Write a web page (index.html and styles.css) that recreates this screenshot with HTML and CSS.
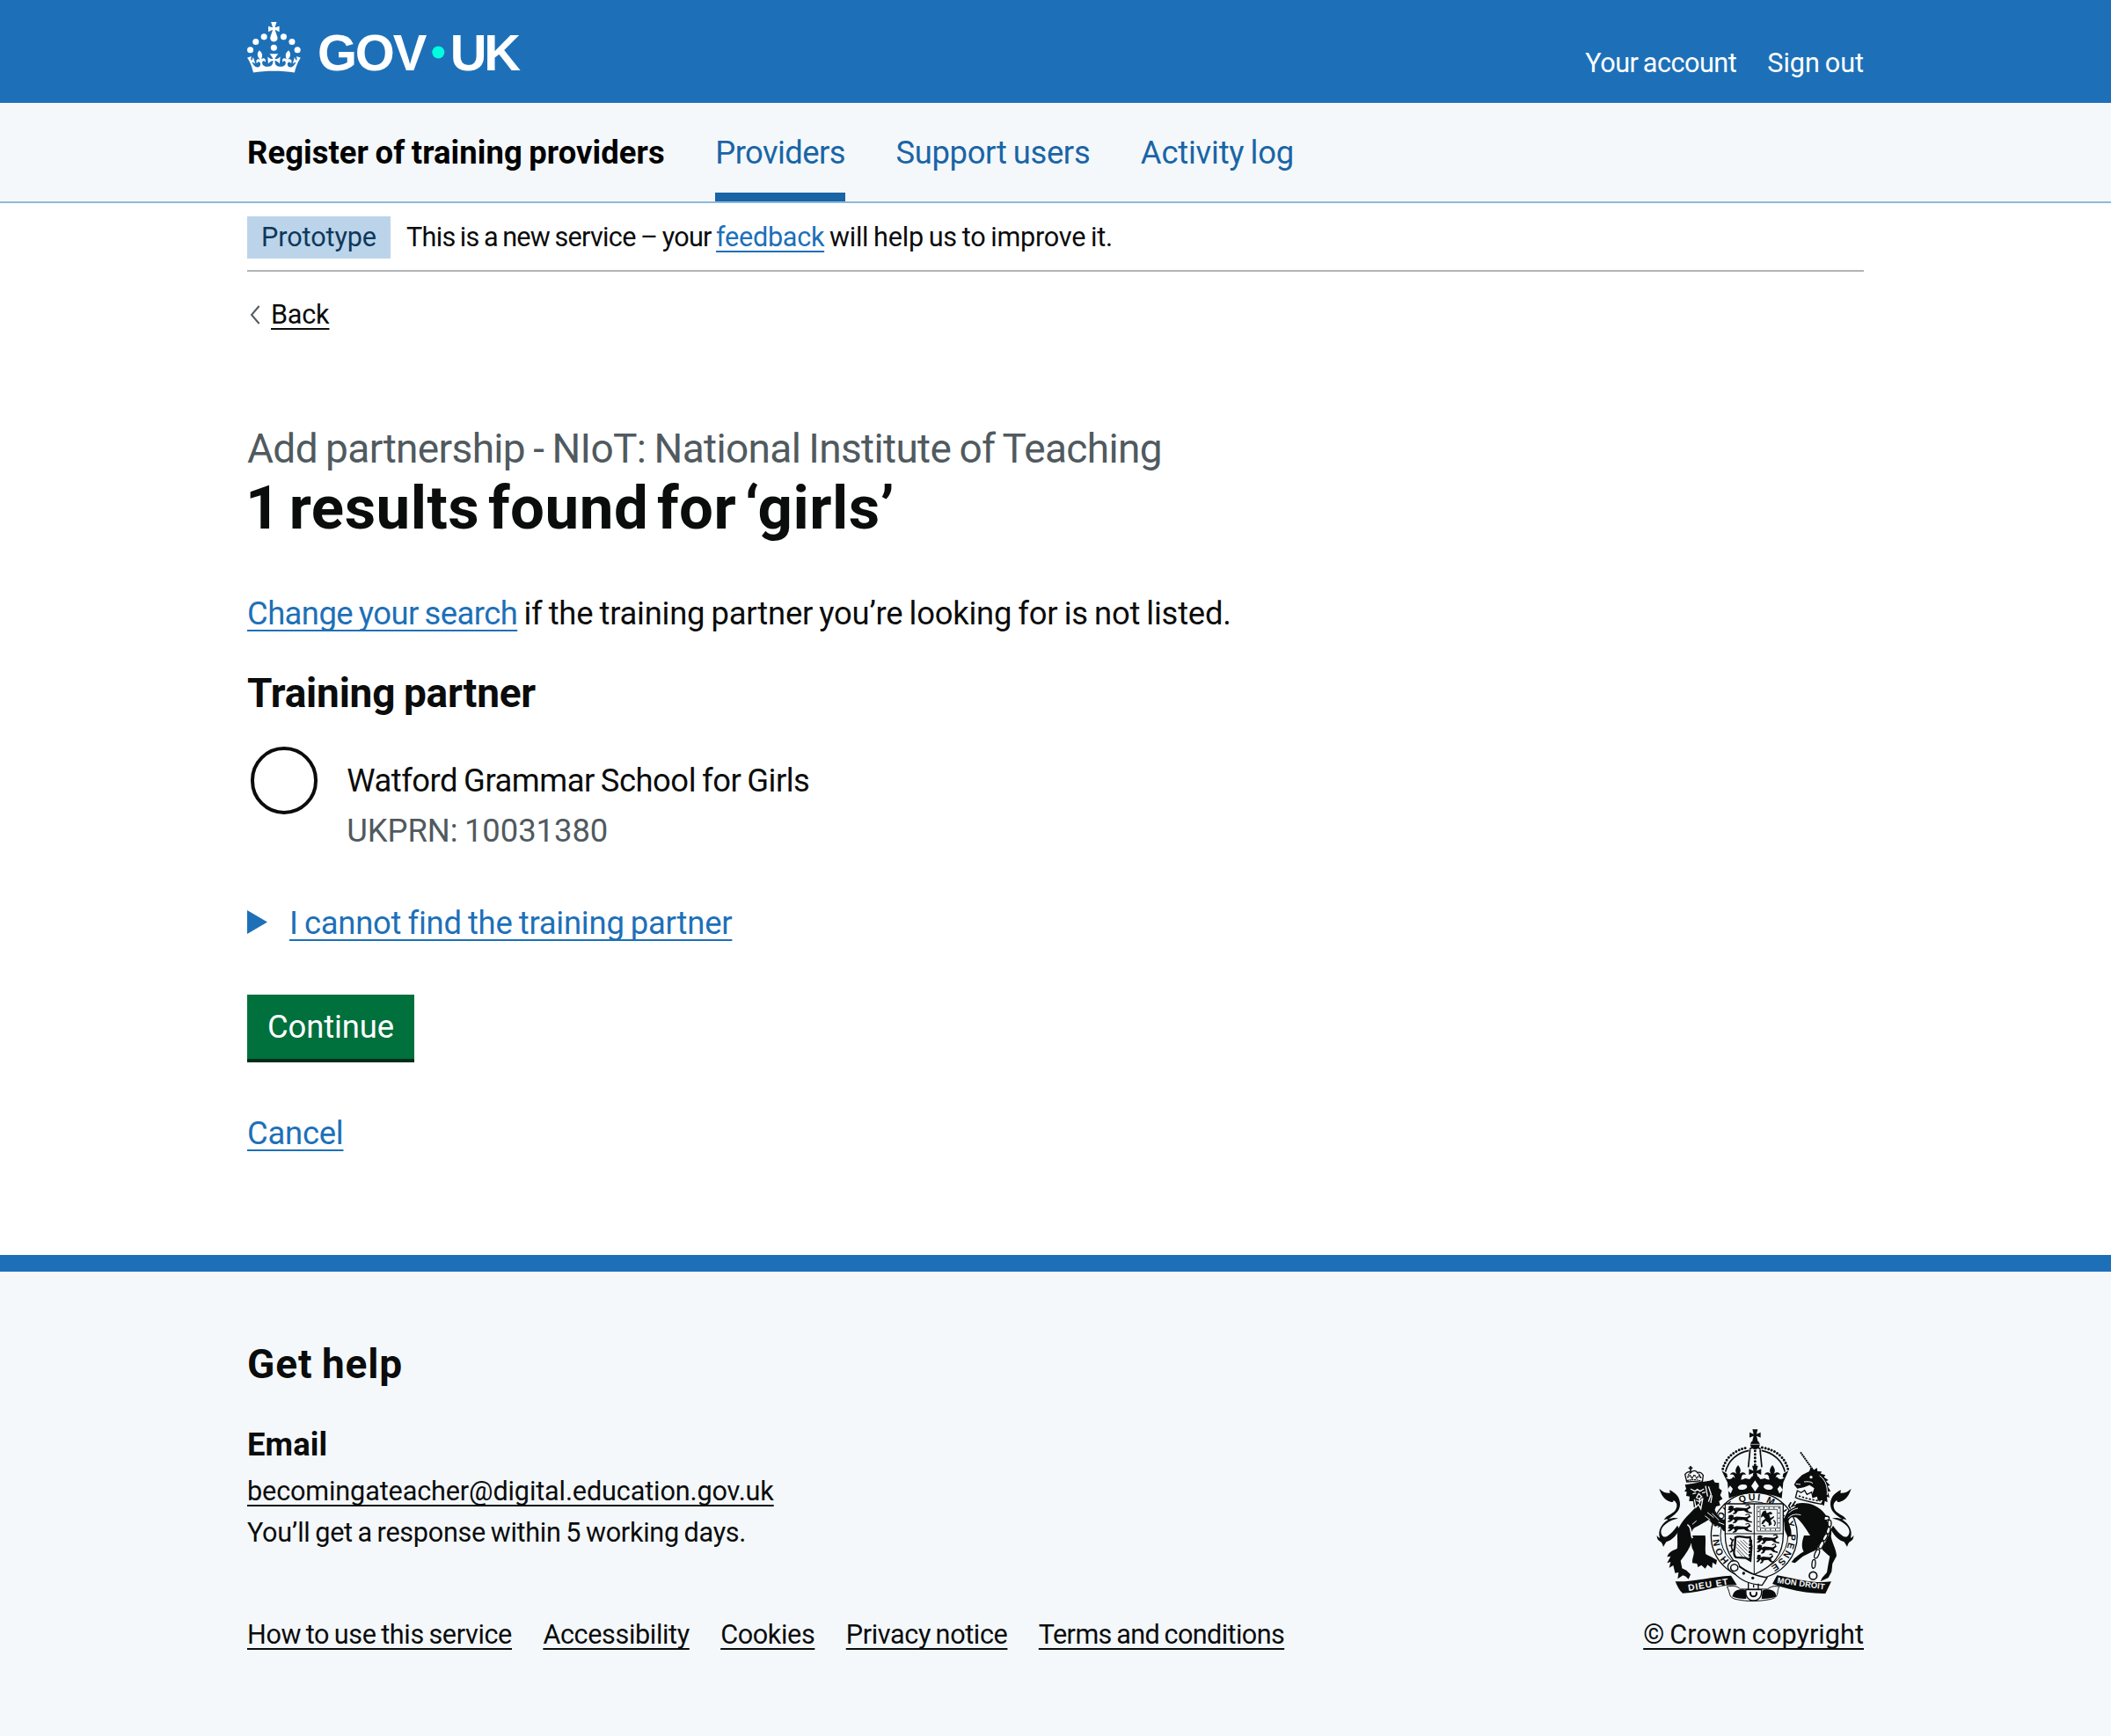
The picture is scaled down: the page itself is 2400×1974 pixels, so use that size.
FILE: index.html
```html
<!DOCTYPE html>
<html lang="en">
<head>
<meta charset="utf-8">
<title>1 results found for ‘girls’ - Register of training providers</title>
<link rel="stylesheet" href="styles.css">
</head>
<body>
<header class="header">
  <div class="container header-row">
    <svg class="logo" viewBox="0 0 324 60" role="img" aria-label="GOV.UK">
      <g fill="#fff">
        <circle cx="20" cy="17.6" r="3.7"/><circle cx="10.2" cy="23.5" r="3.7"/><circle cx="3.7" cy="33.2" r="3.7"/>
        <circle cx="31.7" cy="30.6" r="3.7"/><circle cx="43.3" cy="17.6" r="3.7"/><circle cx="53.2" cy="23.5" r="3.7"/><circle cx="59.7" cy="33.2" r="3.7"/>
        <path d="M33.1,9.8c.2-.1.3-.3.5-.5l4.6,2.4v-6.8l-4.6,1.5c-.1-.2-.3-.3-.5-.5l1.9-5.9h-6.7l1.9,5.9c-.2.1-.3.3-.5.5l-4.6-1.5v6.8l4.6-2.4c.1.2.3.3.5.5l-2.6,8c-.9,2.8,1.2,5.7,4.1,5.7h0c3,0,5.1-2.9,4.1-5.7l-2.6-8ZM37,37.9s-3.4,3.8-4.1,6.1c2.2,0,4.2-.5,6.4-2.8l-.7,8.5c-2-2.8-4.4-4.1-5.7-3.8.1,3.1.5,6.7,5.8,7.2,3.7.3,6.7-1.5,7-3.8.4-2.6-2-4.3-3.7-1.6-1.4-4.5,2.4-6.1,4.9-3.2-1.9-4.5-1.8-7.7,2.4-10.9,3,4,2.6,7.3-1.2,11.1,2.4-1.3,6.2,0,4,4.6-1.2-2.8-3.7-2.2-4.2.2-.3,1.7.7,3.7,3,4.2,1.9.3,4.7-.9,7-5.9-1.3,0-2.4.7-3.9,1.7l2.4-8c.6,2.3,1.4,3.7,2.2,4.5.6-1.6.5-2.8,0-5.3l5,1.8c-2.6,3.6-5.2,8.7-7.3,17.5-7.4-1.1-15.7-1.7-24.5-1.7h0c-8.8,0-17.1.6-24.5,1.7-2.1-8.9-4.7-13.9-7.3-17.5l5-1.8c-.5,2.5-.6,3.7,0,5.3.8-.8,1.6-2.3,2.2-4.5l2.4,8c-1.5-1-2.6-1.7-3.9-1.7,2.3,5,5.2,6.2,7,5.9,2.3-.4,3.3-2.4,3-4.2-.5-2.4-3-3.1-4.2-.2-2.2-4.6,1.6-6,4-4.6-3.7-3.7-4.2-7.1-1.2-11.1,4.2,3.2,4.3,6.4,2.4,10.9,2.5-2.8,6.3-1.3,4.9,3.2-1.8-2.7-4.1-1-3.7,1.6.3,2.3,3.3,4.1,7,3.8,5.4-.5,5.7-4.2,5.8-7.2-1.3-.2-3.7,1-5.7,3.8l-.7-8.5c2.2,2.3,4.2,2.7,6.4,2.8-.7-2.3-4.1-6.1-4.1-6.1h10.6Z"/>
        <text class="wordmark" x="83.5" y="57" textLength="130">GOV</text>
        <text class="wordmark" x="241" y="57" textLength="84">UK</text>
      </g>
      <circle cx="227" cy="36" r="7.3" fill="#00ffe0"/>
    </svg>
    <nav class="account">
      <a class="account-link" href="#">Your account</a>
      <a class="account-link-wide" href="#">Sign out</a>
    </nav>
  </div>
</header>

<section class="service-nav">
  <div class="container service-nav-row">
    <a class="service-name" href="#">Register of training providers</a>
    <a class="nav-item nav-item-active" href="#">Providers</a>
    <a class="nav-item nav-item-users" href="#">Support users</a>
    <a class="nav-item nav-item-log" href="#">Activity log</a>
  </div>
</section>

<div class="container">
  <div class="phase-banner">
    <strong class="tag">Prototype</strong>
    <p class="phase-text"><span class="ls-7">This is a new service – your </span><a class="link ls-3" href="#">feedback</a><span class="ls-2"> will help us to improve it.</span></p>
  </div>

  <a class="back-link" href="#">
    <svg class="chevron" viewBox="0 0 12 22"><path d="M10.6 1 2 11l8.6 10" fill="none" stroke="#505a5f" stroke-width="2"/></svg>
    <span class="back-text">Back</span>
  </a>

  <main class="main">
    <span class="caption">Add partnership - NIoT: National Institute of Teaching</span>
    <h1 class="heading-l">1 results found for ‘girls’</h1>
    <p class="body search-hint"><a class="link ls-5" href="#">Change your search</a><span class="ls-2"> if the training partner you’re looking for is not listed.</span></p>
    <h2 class="heading-m">Training partner</h2>
    <label class="radio">
      <span class="radio-circle"></span>
      <span class="radio-text">
        <span class="radio-label">Watford Grammar School for Girls</span>
        <span class="radio-hint">UKPRN: 10031380</span>
      </span>
    </label>
    <div class="details">
      <svg class="triangle" viewBox="0 0 23 27"><path d="M0 0 23 13.500 0 27z" fill="#1d70b8"/></svg>
      <a class="link ls-2" href="#">I cannot find the training partner</a>
    </div>
    <button class="button" type="button">Continue</button>
    <p class="body cancel"><a class="link ls-2" href="#">Cancel</a></p>
  </main>
</div>

<footer class="footer">
  <div class="container footer-row">
    <div class="footer-main">
      <h2 class="heading-help">Get help</h2>
      <h3 class="heading-s">Email</h3>
      <div class="contact">
        <a class="dark-link ls-1" href="#">becomingateacher@digital.education.gov.uk</a>
        <p class="ls-3">You’ll get a response within 5 working days.</p>
      </div>
      <nav class="footer-links">
        <a class="dark-link ls-4" href="#">How to use this service</a>
        <a class="dark-link ls-4" href="#">Accessibility</a>
        <a class="dark-link ls-4" href="#">Cookies</a>
        <a class="dark-link ls-4" href="#">Privacy notice</a>
        <a class="dark-link ls-6" href="#">Terms and conditions</a>
      </nav>
    </div>
    <div class="copyright">
      <svg class="crest" viewBox="25 30 752 610" aria-hidden="true">
        <defs>
          <g id="passant">
            <path d="M2 3l8-3 8 3-2 6 10-3 28 2 12-5 2 3-10 7 4 6 9 2v4l-15-3-9-6-17 1-6 8-10 2 2-4 5-3-4-6-9 8-8 1 1-4 6-3-7-4 3-4z"/>
            <path d="M60 8c8-8 2-12-8-7" fill="none" stroke="#0b0c0c" stroke-width="3"/>
          </g>
          <path id="cross" d="M-5-3-9-19H9L5-3 19-9V9L5 3 9 19H-9L-5 3-19 9V-9z"/>
          <path id="fleur" d="M0-24c9 12 9 20 4 29 8-8 18-6 19 3-5-4-10-2-12 4l-3 14H-8l-3-14c-2-6-7-8-12-4 1-9 11-11 19-3-5-9-5-17 4-29z"/>
          <path id="tail" d="M80 245c12 12 24 16 37 15l-2-10c18 8 36 22 36 48 0 26-20 38-40 51 12-4 25-6 34-2-15 2-30 8-42 18-18 14-22 30-10 43 10 8 30-10 49-37l8 14c-16 26-30 38-46 42-4 6-6 10-10 17-3-9-4-14-10-18-8-4-13-12-12-22 3 5 6 8 10 9-8-26 6-47 28-62-2-2-9-2-15 2 10-17 28-20 38-31 10-14 10-29-4-37 0 4-4 7-7 6-14-3-32-12-42-46z"/>
          <path id="motto" d="M319 490A120 120 0 1 1 424 523"/>
        </defs>
        <g fill="#0b0c0c">
          <!-- supporters' tails -->
          <use href="#tail"/>
          <use href="#tail" transform="matrix(-1 0 0 1 815 0)"/>
          <!-- garter -->
          <circle cx="404" cy="405" r="147" fill="#f4f8fb" stroke="#0b0c0c" stroke-width="4"/>
          <circle cx="404" cy="405" r="115" fill="#f4f8fb" stroke="#0b0c0c" stroke-width="3"/>
          <text class="motto-ring"><textPath href="#motto" textLength="600">HONI SOIT QUI MAL Y PENSE</textPath></text>
          <!-- lion -->
          <path d="M207 305c-20 24-50 47-62 78-7 22 0 45-4 67-14 5-29 12-34 28l12-2-12 23 12-4-5 20 14-8 6 26 12-2-3 22 18-12 10 4 9 9 7-16-14-14-15-7-5-26c18-22 32-44 39-67-6-18-5-33 8-45 18-10 36-19 49-28l12 14 27 9 10 15 20 3-1-14-14-7 12-5-8-13-22-8-28-48z"/>
          <path d="M187 405h50c3 24-2 44 2 64l21 10 17 10-3 16-12-8-2 20-15-12-8 13-13-12-12 7-3-12-16-2c-2-18 10-30 3-44-10-16-3-32-9-50z"/>
          <path d="M176 368c18 10 8 31 18 46" fill="none" stroke="#f4f8fb" stroke-width="5"/>
          <path d="M168 232l4 14-6 8 8 2-2 14 12 2-2 16 14 0 2 20 14-2 4 16 12-4 14 8 12-12 14 8 6-16 14-4-4-14 12-8-8-12 6-16-10-8 0-18-14-2-6-10-12 4z"/>
          <path d="M187 246l15 8 8-6 9 6 14-8M194 263l12-3M226 260l12-3M215 262l-8 14 9 4 9-7zM206 284c8 8 16 6 20-5M200 282l5 27 9-10 8 15 7-37M218 280v16M248 238l9 26-9 26M260 268l-4 26M238 236l7 36" fill="none" stroke="#f4f8fb" stroke-width="4"/>
          <path d="M236 338l18 14M244 326l22 18M260 330l24 23M207 355l-14 12M282 360l20 8" fill="none" stroke="#f4f8fb" stroke-width="3"/>
          <path d="M174 222l-6-25c5-9 14-11 20-7 8-8 16-8 22 0 9-2 16 2 20 10l-3 24c-18-4-36-4-53-2z" fill="#f4f8fb" stroke="#0b0c0c" stroke-width="4"/>
          <path d="M187 168v22M180 175h14" fill="none" stroke="#0b0c0c" stroke-width="5"/>
          <path d="M176 208l10-8 6 10 8-12 8 12 8-10 8 10M175 218c16-5 34-4 50 2M188 190c-8 4-10 10-10 18M209 190c8 4 10 10 10 18" fill="none" stroke="#0b0c0c" stroke-width="4" stroke-dasharray="6 2"/>
          <!-- unicorn -->
          <path d="M562 121l48 68" fill="none" stroke="#0b0c0c" stroke-width="6" stroke-dasharray="6 2"/>
          <path d="M540 232l7-13 20-20 25-13 5-14 10 10 11-8 2 12 14 1-3 7 16 5-5 7 15 10-8 4 14 14-9 2 11 18-10 1 6 20-9-2 2 19-9-5-3 17-38-25-1-18 6-17-16-11-20 8-22 4z"/>
          <circle cx="598" cy="206" r="5" fill="#f4f8fb"/>
          <path d="M546 229l16 2M627 201c20 14 28 36 26 66M574 222c12-1 22-2 30 5" fill="none" stroke="#f4f8fb" stroke-width="3"/>
          <path d="M551 252l13 7 12-8 8 14 16-8 4 18 16-5 3 14 18-2-8 16c-30-5-60-10-88-22z" fill="#f4f8fb" stroke="#0b0c0c" stroke-width="4"/>
          <path d="M556 270c24 8 50 15 74 17" fill="none" stroke="#0b0c0c" stroke-width="5" stroke-dasharray="7 5"/>
          <path d="M547 297c38-9 76 6 97 33 18 22 27 51 22 77 3 23 18 42 19 68l-14 26-3 28-11 20-27 13 6-13 16-18 5-30 5-25c-24-16-34-36-51-52-20-18-30-50-62-80-15-6-25 1-28 12l9 31 1 15-12 10-11-26-3-38 14-27 26-14z"/>
          <path d="M574 405h55l-9 47-26 12-24 12-27 23-12-3 10-13 20-16 12-7c-10-16-5-38 1-55z"/>
          <path d="M520 346c12-14 26-15 43-11M553 312c-14 3-24 8-31 17" fill="none" stroke="#f4f8fb" stroke-width="3"/>
          <path d="M530 292l-8 12 6 10M545 288l-14 20M533 303h14" fill="none" stroke="#0b0c0c" stroke-width="5"/>
          <path d="M645 346c24 4 18 28 10 50-12 26-32 60-42 92l-8 40" fill="none" stroke="#f4f8fb" stroke-width="12"/>
          <g fill="none" stroke="#0b0c0c" stroke-width="4">
            <ellipse cx="649" cy="346" rx="11" ry="7"/><ellipse cx="661" cy="364" rx="6" ry="12"/><ellipse cx="657" cy="388" rx="6" ry="12" transform="rotate(15 657 388)"/>
            <ellipse cx="646" cy="411" rx="6" ry="13" transform="rotate(28 646 411)"/><ellipse cx="633" cy="437" rx="7" ry="14" transform="rotate(25 633 437)"/>
            <ellipse cx="618" cy="468" rx="7" ry="16" transform="rotate(22 618 468)"/><ellipse cx="607" cy="502" rx="6" ry="15" transform="rotate(5 607 502)"/>
            <circle cx="605" cy="542" r="13" stroke-width="5"/>
          </g>
          <!-- shield -->
          <path d="M305 297h198v105c0 70-34 108-99 136-65-28-99-66-99-136z" fill="#f4f8fb" stroke="#0b0c0c" stroke-width="4"/>
          <path d="M404 297v240M305 399h198" stroke="#0b0c0c" stroke-width="3"/>
          <use href="#passant" transform="translate(314 303) scale(1.16 1.1)"/>
          <use href="#passant" transform="translate(314 334) scale(1.16 1.1)"/>
          <use href="#passant" transform="translate(314 366) scale(1.16 1.1)"/>
          <use href="#passant" transform="translate(413 404) scale(1.08 1.15)"/>
          <use href="#passant" transform="translate(413 436) scale(1 1.15)"/>
          <use href="#passant" transform="translate(412 470) scale(.84 1.15)"/>
          <path d="M414 306h79v84h-79zM424 316h59v64h-59z" fill="none" stroke="#0b0c0c" stroke-width="2"/>
          <path d="M419 311h69v74h-69z" fill="none" stroke="#0b0c0c" stroke-width="5" stroke-dasharray="3 14"/>
          <path d="M433 324l10-5 4 10 12-5 8 5-6 5-6-2 4 14 13-8-1 6-11 9 4 14-10 6-1-11-10-7-8 10-7 2 5-12 9-7-7-9-8 5 1-8z"/>
          <path d="M472 372c7-7 4-15-2-19M433 370l9 4" fill="none" stroke="#0b0c0c" stroke-width="4"/>
          <path d="M340 411c18-9 32 5 50 0l5 32-4 48-15-9-34-2c-10-8-8-22-4-36z" fill="#f4f8fb" stroke="#0b0c0c" stroke-width="7"/>
          <path d="M392 420l-3 68" stroke="#0b0c0c" stroke-width="10" stroke-dasharray="9 3"/>
          <path d="M347 424l34 34M345 434l36 37M343 445l32 34M345 456l20 23M356 422l26 25M366 420l16 16" stroke="#0b0c0c" stroke-width="2"/>
          <path d="M334 418c-9 10-10 26-4 38M322 414l10 10M318 440l14-2M322 462l12-8" fill="none" stroke="#0b0c0c" stroke-width="5"/>
          <!-- crown -->
          <path d="M293 186c32-10 200-10 229 0l-22 53-5 34c-58-20-124-20-182 0l-5-34z" fill="#f4f8fb"/>
          <use href="#cross" x="407" y="62"/>
          <circle cx="407" cy="95" r="16"/>
          <path d="M392 94h30" stroke="#f4f8fb" stroke-width="2"/>
          <path d="M297 178c10-40 42-66 86-73M519 178c-10-40-42-66-88-73" fill="none" stroke="#0b0c0c" stroke-width="9" stroke-linecap="round" stroke-dasharray="0 11"/>
          <path d="M306 188c9-38 40-66 80-73M509 188c-9-38-40-66-80-73" fill="none" stroke="#0b0c0c" stroke-width="5"/>
          <path d="M390 112l-6 60M424 112l6 60M388 110c12-8 26-8 38 0" fill="none" stroke="#0b0c0c" stroke-width="5"/>
          <path d="M407 116v52" stroke="#0b0c0c" stroke-width="9" stroke-linecap="round" stroke-dasharray="0 12"/>
          <path d="M293 184l18 10 2 12-6 2c10 8 20 6 26-4 6 12 28 14 40 6l15 3c5-4 8-10 8-10l8 4h6l8-4s3 6 8 10l15-3c12 8 34 6 40-6 6 10 16 12 26 4l-6-2 2-12 18-10-18 40-5 54c-50-23-130-23-180 0l-5-54z"/>
          <use href="#cross" transform="translate(407 188) scale(1.1)"/>
          <use href="#fleur" transform="translate(349 190) scale(1.15 1.05)"/>
          <use href="#fleur" transform="translate(466 190) scale(1.15 1.05)"/>
          <g fill="#f4f8fb">
            <path d="M407 217l13 19-13 19-13-19zM322 235l9 11-7 16-12-12zM492 235l-9 11 7 16 12-12z"/>
            <ellipse cx="364" cy="240" rx="16" ry="9" transform="rotate(-9 364 240)"/><ellipse cx="452" cy="240" rx="16" ry="9" transform="rotate(9 452 240)"/>
          </g>
          <!-- ribbon and buckle -->
          <path d="M311 580c20-6 36-2 46 8h92c14-10 26-12 41-8-12 15 4 36-32 43-45 8-74 8-115 0-30-6-18-22-32-43z" fill="#f4f8fb" stroke="#0b0c0c" stroke-width="3"/>
          <path d="M334 601c8-14 32-14 44-8l-1 28c-20 1-34-2-48-8zM476 601c-8-14-32-14-44-8l-3 28c20 1 36-2 51-8z"/>
          <path d="M324 494c18-7 28 0 30 18 26 20 54 31 94 37l-17 26c-44-5-70-14-96-42-22-9-28-24-11-39z" fill="#f4f8fb" stroke="#0b0c0c" stroke-width="4"/>
          <path d="M336 503c18 4 16 22-2 24-14-4-14-20 2-24z" fill="none" stroke="#0b0c0c" stroke-width="4"/>
          <circle cx="368" cy="534" r="5"/><circle cx="399" cy="550" r="5"/>
          <path d="M384 566v25h34v-22M402 573v10" fill="none" stroke="#0b0c0c" stroke-width="4"/>
          <path d="M376 590h53c2 22-8 37-27 37s-29-15-26-37z" fill="#f4f8fb" stroke="#0b0c0c" stroke-width="4"/>
          <path d="M391 598c-4 20 25 20 21 0" fill="none" stroke="#0b0c0c" stroke-width="6"/>
          <path d="M135 562c62 2 124-17 190-20l20 32c-60-2-110 25-185 28-12-10-18-23-25-40z"/>
          <path d="M482 541c60 10 120 30 185 21l-20 41c-58 1-116-10-181-33z"/>
          <text class="motto" transform="translate(180 594) rotate(-9)" textLength="138">DIEU ET</text>
          <text class="motto motto-right" transform="translate(482 567) rotate(8)" textLength="163">MON DROIT</text>
        </g>
      </svg>
      <a class="dark-link copyright-link" href="#">© Crown copyright</a>
    </div>
  </div>
</footer>
</body>
</html>
```
FILE: styles.css
```css
* { box-sizing: border-box; }

body {
  margin: 0;
  background: #fff;
  color: #0b0c0c;
  font-family: Roboto, "Liberation Sans", sans-serif;
  font-size: 36.4px;
  line-height: 48px;
  word-spacing: -1.6px;
}

h1, h2, h3, p { margin: 0; font-weight: 400; }
svg { display: block; }
a { color: inherit; text-decoration: none; }

.container { width: 1838px; margin: 0 auto; }

/* tracking steps */
.ls-1 { letter-spacing: -0.13px; }
.ls-2 { letter-spacing: -0.22px; }
.ls-3 { letter-spacing: -0.28px; }
.ls-4 { letter-spacing: -0.37px; }
.ls-5 { letter-spacing: -0.56px; }
.ls-6 { letter-spacing: -0.6px; }
.ls-7 { letter-spacing: -0.7px; }

.link,
.dark-link {
  text-decoration: underline;
  text-decoration-thickness: 2px;
  text-decoration-skip-ink: none;
  text-underline-offset: 6px;
}
.link { color: #1d70b8; }
.dark-link { color: #0b0c0c; text-underline-offset: 5px; }

/* header */
.header { height: 117px; background: #1d70b8; color: #fff; }
.header-row { display: flex; justify-content: space-between; align-items: flex-start; }
.logo { width: 310.2px; height: 57.45px; margin-top: 25px; overflow: visible; }
.wordmark { font: 700 60.5px "Liberation Sans", Arial, sans-serif; }
.account { display: flex; gap: 35px; margin-top: 53px; font-size: 30.6px; line-height: 38px; }
.account-link { letter-spacing: -0.5px; }
.account-link-wide { letter-spacing: -0.03px; }

/* service navigation */
.service-nav { height: 114px; background: #f4f8fb; border-bottom: 2px solid #8eb8dc; }
.service-nav-row { display: flex; gap: 57.5px; height: 112px; }
.service-name { padding-top: 32.6px; color: #000; font-weight: 700; letter-spacing: 0.08px; }
.nav-item { padding-top: 32.6px; color: #1a65a6; }
.nav-item-active { border-bottom: 10px solid #1a65a6; letter-spacing: -0.58px; }
.nav-item-users { letter-spacing: -0.32px; }
.nav-item-log { letter-spacing: -0.2px; }

/* phase banner */
.phase-banner {
  display: flex;
  align-items: center;
  height: 78px;
  padding: 15px 0 13px;
  border-bottom: 2px solid #b1b4b6;
  font-size: 30.6px;
}
.tag {
  padding: 0 16px;
  background: #bbd4ea;
  color: #0f385c;
  font-weight: 400;
  letter-spacing: -0.1px;
}
.phase-text { margin-left: 18px; white-space: pre; }
.phase-text .link { text-underline-offset: 5px; }

.back-link {
  display: flex;
  gap: 12px;
  align-items: center;
  margin-top: 30px;
  padding-left: 3px;
  font-size: 30.6px;
  line-height: 38px;
}
.chevron { width: 12px; height: 22px; }
.back-text {
  letter-spacing: -0.2px;
  text-decoration: underline;
  text-decoration-thickness: 2px;
  text-underline-offset: 5px;
}

/* page content */
.main { display: flex; flex-direction: column; align-items: flex-start; padding-top: 104px; }
.caption { color: #505a5f; font-size: 46px; line-height: 58px; letter-spacing: -0.65px; }
.heading-l { font-size: 69px; font-weight: 700; line-height: 77px; letter-spacing: 0.5px; word-spacing: -8px; text-indent: -2px; }
.search-hint { margin-top: 58px; white-space: pre; }
.heading-m { margin-top: 36.5px; font-size: 46px; font-weight: 700; line-height: 58px; letter-spacing: -0.2px; }
.radio { display: flex; gap: 33px; margin-top: 32.5px; padding-left: 3.6px; }
.radio-circle { width: 76.6px; height: 76.6px; border: 4px solid #0b0c0c; border-radius: 50%; }
.radio-text { display: flex; flex-direction: column; gap: 9px; padding-top: 14.6px; }
.radio-label { letter-spacing: -0.48px; }
.radio-hint { color: #505a5f; letter-spacing: -0.04px; }
.details { display: flex; align-items: center; gap: 25px; margin-top: 57.4px; }
.triangle { width: 23px; height: 27px; margin-top: -2px; }
.button {
  width: 190px;
  height: 73px;
  margin: 57px 0 4px;
  padding: 2px 0 0;
  border: 0;
  background: #00703c;
  box-shadow: 0 4px 0 #002d18;
  color: #fff;
  font: inherit;
  letter-spacing: -0.09px;
}
.cancel { margin-top: 57.4px; }

/* footer */
.footer {
  height: 547px;
  margin-top: 114px;
  padding-top: 76px;
  border-top: 19px solid #1d70b8;
  background: #f4f8fb;
}
.footer-row { display: flex; justify-content: space-between; align-items: flex-end; font-size: 30.6px; line-height: 38px; }
.heading-help { font-size: 46px; font-weight: 700; line-height: 58px; letter-spacing: 0.85px; }
.heading-s { margin-top: 38.6px; font-size: 36.4px; font-weight: 700; line-height: 48px; letter-spacing: 0.1px; }
.contact { margin-top: 4.7px; line-height: 47.8px; }
.footer-links { display: flex; gap: 35.4px; margin-top: 72.6px; }
.copyright { display: flex; flex-direction: column; gap: 16px; }
.copyright-link { letter-spacing: 0.04px; }
.crest { width: 250.7px; height: 203.3px; }
.motto, .motto-ring { font: 700 32px "Liberation Sans", Arial, sans-serif; word-spacing: 0; }
.motto { fill: #f4f8fb; font-size: 31px; }
.motto-right { font-size: 28px; }
```
